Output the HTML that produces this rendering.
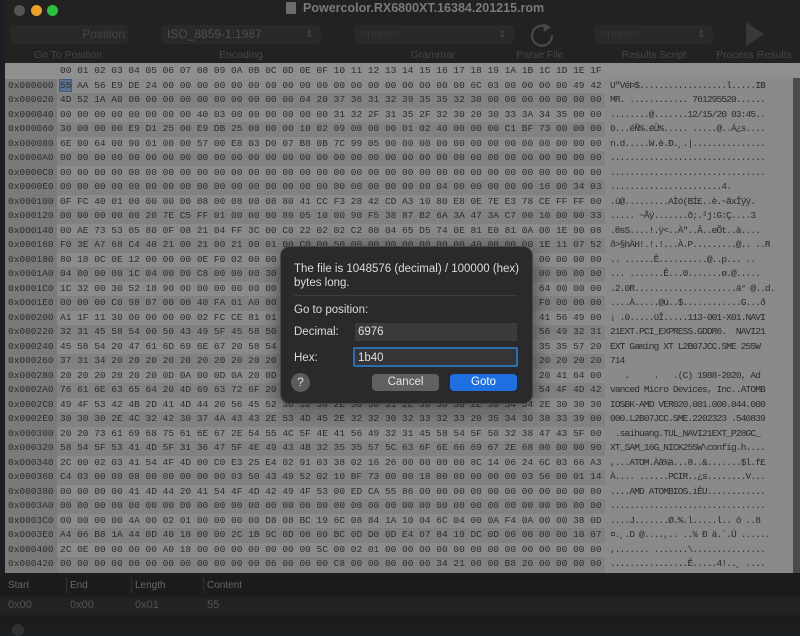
<!DOCTYPE html>
<html><head><meta charset="utf-8"><style>
*{margin:0;padding:0;box-sizing:border-box}
body{width:800px;height:630px;overflow:hidden;background:#1b1e23;font-family:"Liberation Sans",sans-serif;position:relative}
.win{position:absolute;left:5px;top:0;width:795px;height:630px;background:#222}
.t{position:absolute;white-space:pre}
.dot{position:absolute;top:5px;width:11px;height:11px;border-radius:50%}
.fld{position:absolute;top:25px;height:19px;background:#292929;border-radius:4px;color:#444;font-size:12px;line-height:19px}
.lbl{position:absolute;top:49px;font-size:10.5px;color:#474747;text-align:center;width:120px}
.mono{font-family:"Liberation Mono",monospace;font-size:9.5px;color:#2b2b2b}
#hexhdr{position:absolute;left:5px;top:63px;width:795px;height:15.5px;background:#8f8f8f}
.row{position:absolute;left:5px;width:788px;height:14.5px;line-height:14.5px;overflow:hidden}
.row .a{position:absolute;left:0;width:52px;height:100%;background:#7a7a7a;padding-left:3px}
.row .h{position:absolute;left:52px;width:548px;height:100%;padding-left:3px;white-space:pre;overflow:hidden}
.row .s{position:absolute;left:600px;width:188px;height:100%;background:#8a8a8a;padding-left:5px;letter-spacing:-0.86px;white-space:pre}
.row.l .h{background:#8b8b8b}
.row.d .h{background:#818181}
</style></head><body>
<div class="win">
<div class="dot" style="left:9px;background:#555"></div>
<div class="dot" style="left:26px;background:#e9a22a"></div>
<div class="dot" style="left:42px;background:#2cbf41"></div>
<div class="t" style="left:281px;top:2px;width:10px;height:12px;background:#6c6c6c;border-radius:1px"></div>
<div class="t" style="left:298px;top:1px;font-size:12.5px;font-weight:bold;color:#7a7a7a">Powercolor.RX6800XT.16384.201215.rom</div>

<div class="fld" style="left:5px;width:118px;text-align:right;padding-right:3px">Position</div>
<div class="fld" style="left:156px;width:160px;padding-left:6px;color:#4e4e4e">ISO_8859-1:1987<span style="position:absolute;right:8px;font-size:9px">⇕</span></div>
<div class="fld" style="left:349px;width:160px;padding-left:6px;color:#363636">&lt;none&gt;<span style="position:absolute;right:8px;font-size:9px;color:#4a4a4a">⇕</span></div>
<svg class="t" style="left:523px;top:21px" width="30" height="30" viewBox="0 0 30 30"><path d="M19 6 A10 10 0 1 0 24 14" fill="none" stroke="#484848" stroke-width="2.2"/><path d="M15 2 L23 6 L16 11 Z" fill="#484848"/></svg>
<div class="fld" style="left:589px;width:119px;padding-left:6px;color:#363636">&lt;none&gt;<span style="position:absolute;right:8px;font-size:9px;color:#4a4a4a">⇕</span></div>
<svg class="t" style="left:741px;top:22px" width="20" height="24"><path d="M0 0 L18 12 L0 24Z" fill="#383838"/></svg>
<div class="lbl" style="left:3px">Go To Position</div>
<div class="lbl" style="left:176px">Encoding</div>
<div class="lbl" style="left:368px">Grammar</div>
<div class="lbl" style="left:475px">Parse File</div>
<div class="lbl" style="left:589px">Results Script</div>
<div class="lbl" style="left:689px">Process Results</div>
</div>

<div id="hexhdr" class="mono"><span class="t" style="left:55px;line-height:15.5px">00 01 02 03 04 05 06 07 08 09 0A 0B 0C 0D 0E 0F 10 11 12 13 14 15 16 17 18 19 1A 1B 1C 1D 1E 1F</span></div>
<div style="position:absolute;left:793px;top:78px;width:7px;height:497px;background:#4a4a4a"></div>

<div class="mono">
<div class="row l" style="top:78.5px"><span class="a">0x000000</span><span class="h"><span style="outline:1px solid #3a5a80;background:#5d7190">55</span> AA 56 E9 DE 24 00 00 00 00 00 00 00 00 00 00 00 00 00 00 00 00 00 00 6C 03 00 00 00 00 49 42</span><span class="s">U"VéÞ$..................l.....IB</span></div>
<div class="row d" style="top:93px"><span class="a">0x000020</span><span class="h">4D 52 1A A0 00 00 00 00 00 00 00 00 00 00 04 20 37 36 31 32 39 35 35 32 30 00 00 00 00 00 00 00</span><span class="s">MR. ............ 761295520......</span></div>
<div class="row l" style="top:107.5px"><span class="a">0x000040</span><span class="h">00 00 00 00 00 00 00 00 40 03 00 00 00 00 00 00 31 32 2F 31 35 2F 32 30 20 30 33 3A 34 35 00 00</span><span class="s">........@.......12/15/20 03:45..</span></div>
<div class="row d" style="top:122px"><span class="a">0x000060</span><span class="h">30 00 00 00 E9 D1 25 00 E9 DB 25 00 00 00 10 02 09 00 00 00 01 02 40 00 00 00 C1 BF 73 00 00 00</span><span class="s">0...éÑ%.éÛ%..... .....@..Á¿s....</span></div>
<div class="row l" style="top:136.5px"><span class="a">0x000080</span><span class="h">6E 00 64 00 90 01 00 00 57 00 E8 03 D0 07 B8 0B 7C 99 05 00 00 00 00 00 00 00 00 00 00 00 00 00</span><span class="s">n.d.....W.è.Ð.¸.|...............</span></div>
<div class="row d" style="top:151px"><span class="a">0x0000A0</span><span class="h">00 00 00 00 00 00 00 00 00 00 00 00 00 00 00 00 00 00 00 00 00 00 00 00 00 00 00 00 00 00 00 00</span><span class="s">................................</span></div>
<div class="row l" style="top:165.5px"><span class="a">0x0000C0</span><span class="h">00 00 00 00 00 00 00 00 00 00 00 00 00 00 00 00 00 00 00 00 00 00 00 00 00 00 00 00 00 00 00 00</span><span class="s">................................</span></div>
<div class="row d" style="top:180px"><span class="a">0x0000E0</span><span class="h">00 00 00 00 00 00 00 00 00 00 00 00 00 00 00 00 00 00 00 00 00 00 04 00 00 00 00 00 16 00 34 03</span><span class="s">.......................4.</span></div>
<div class="row l" style="top:194.5px"><span class="a">0x000100</span><span class="h">0F FC 40 01 00 00 00 00 08 00 08 00 08 80 41 CC F3 28 42 CD A3 10 80 E8 0E 7E E3 78 CE FF FF 00</span><span class="s">.ü@.........AÌó(BÍ£..è.~ãxÎÿÿ.</span></div>
<div class="row d" style="top:209px"><span class="a">0x000120</span><span class="h">00 00 00 00 00 20 7E C5 FF 01 00 00 00 80 05 10 00 90 F5 38 87 B2 6A 3A 47 3A C7 00 10 00 00 33</span><span class="s">..... ~Åÿ.......õ;.²j:G:Ç....3</span></div>
<div class="row l" style="top:223.5px"><span class="a">0x000140</span><span class="h">00 AE 73 53 05 80 0F 08 21 04 FF 3C 00 C0 22 02 02 C2 80 04 65 D5 74 0E 81 E0 81 0A 00 1E 90 08</span><span class="s">.®sS....!.ÿ<..À"..Â..eÕt..à....</span></div>
<div class="row d" style="top:238px"><span class="a">0x000160</span><span class="h">F0 3E A7 68 C4 48 21 00 21 00 21 00 01 00 C0 00 50 00 00 00 00 00 00 00 40 00 00 00 1E 11 07 52</span><span class="s">ð>§hÄH!.!.!...À.P.........@.. ..R</span></div>
<div class="row l" style="top:252.5px"><span class="a">0x000180</span><span class="h">80 18 0C 0E 12 00 00 00 0E F0 02 00 00 00 00 00 00 00 00 00 00 00 00 40 00 00 70 00 00 00 00 00</span><span class="s">.. ......Ê..........@..p... ..</span></div>
<div class="row d" style="top:267px"><span class="a">0x0001A0</span><span class="h">04 00 00 00 1C 04 00 00 C8 00 00 00 30 00 00 00 00 00 00 00 00 F8 00 40 00 00 00 00 00 00 00 00</span><span class="s">... .......Ê...0.......ø.@.....</span></div>
<div class="row l" style="top:281.5px"><span class="a">0x0001C0</span><span class="h">1C 32 00 30 52 18 90 00 00 00 00 00 00 00 00 00 00 00 00 00 00 00 E4 B0 20 40 00 00 64 00 00 00</span><span class="s">.2.0R.....................ä° @..d.</span></div>
<div class="row d" style="top:296px"><span class="a">0x0001E0</span><span class="h">00 00 00 C0 98 07 00 00 40 FA 01 A0 00 00 00 00 00 00 00 00 00 00 00 00 00 47 01 00 F0 00 00 00</span><span class="s">....À.....@ú..$............G...ð</span></div>
<div class="row l" style="top:310.5px"><span class="a">0x000200</span><span class="h">A1 1F 11 30 00 00 00 00 02 FC CE 81 01 00 00 31 31 33 2D 30 30 31 2D 58 30 31 00 4E 41 56 49 00</span><span class="s">¡ .0.....üÎ.....113-001-X01.NAVI</span></div>
<div class="row d" style="top:325px"><span class="a">0x000220</span><span class="h">32 31 45 58 54 00 50 43 49 5F 45 58 50 52 45 53 53 00 47 44 44 52 36 00 20 20 4E 41 56 49 32 31</span><span class="s">21EXT.PCI_EXPRESS.GDDR6.  NAVI21</span></div>
<div class="row l" style="top:339.5px"><span class="a">0x000240</span><span class="h">45 58 54 20 47 61 6D 69 6E 67 20 58 54 20 4C 32 42 30 37 4A 43 43 2E 53 4D 45 20 32 35 35 57 20</span><span class="s">EXT Gaming XT L2B07JCC.SME 255W</span></div>
<div class="row d" style="top:354px"><span class="a">0x000260</span><span class="h">37 31 34 20 20 20 20 20 20 20 20 20 20 20 20 20 20 20 20 20 20 20 20 20 20 20 20 20 20 20 20 20</span><span class="s">714</span></div>
<div class="row l" style="top:368.5px"><span class="a">0x000280</span><span class="h">20 20 20 20 20 20 0D 0A 00 0D 0A 20 0D 0A 28 43 29 20 31 39 38 38 2D 32 30 32 30 2C 20 41 64 00</span><span class="s">   .     .   .(C) 1988-2020, Ad</span></div>
<div class="row d" style="top:383px"><span class="a">0x0002A0</span><span class="h">76 61 6E 63 65 64 20 4D 69 63 72 6F 20 44 65 76 69 63 65 73 2C 20 49 6E 63 2E 00 41 54 4F 4D 42</span><span class="s">vanced Micro Devices, Inc..ATOMB</span></div>
<div class="row l" style="top:397.5px"><span class="a">0x0002C0</span><span class="h">49 4F 53 42 4B 2D 41 4D 44 20 56 45 52 30 32 30 2E 30 30 31 2E 30 30 30 2E 30 34 34 2E 30 30 30</span><span class="s">IOSBK-AMD VER020.001.000.044.000</span></div>
<div class="row d" style="top:412px"><span class="a">0x0002E0</span><span class="h">30 30 30 2E 4C 32 42 30 37 4A 43 43 2E 53 4D 45 2E 32 32 30 32 33 32 33 20 35 34 30 38 33 39 00</span><span class="s">000.L2B07JCC.SME.2202323 .540839</span></div>
<div class="row l" style="top:426.5px"><span class="a">0x000300</span><span class="h">20 20 73 61 69 68 75 61 6E 67 2E 54 55 4C 5F 4E 41 56 49 32 31 45 58 54 5F 50 32 38 47 43 5F 00</span><span class="s"> .saihuang.TUL_NAVI21EXT_P28GC_</span></div>
<div class="row d" style="top:441px"><span class="a">0x000320</span><span class="h">58 54 5F 53 41 4D 5F 31 36 47 5F 4E 49 43 4B 32 35 35 57 5C 63 6F 6E 66 69 67 2E 68 00 00 00 90</span><span class="s">XT_SAM_16G_NICK255W\config.h....</span></div>
<div class="row l" style="top:455.5px"><span class="a">0x000340</span><span class="h">2C 00 02 03 41 54 4F 4D 00 C0 E3 25 E4 02 91 03 38 02 16 26 00 00 00 00 8C 14 06 24 6C 03 66 A3</span><span class="s">,...ATOM.Àã%ä...8..&.......$l.f£</span></div>
<div class="row d" style="top:470px"><span class="a">0x000360</span><span class="h">C4 03 00 00 08 00 00 00 00 00 03 50 43 49 52 02 10 BF 73 00 00 18 00 00 00 00 00 03 56 00 01 14</span><span class="s">Ä.... ......PCIR..¿s........V...</span></div>
<div class="row l" style="top:484.5px"><span class="a">0x000380</span><span class="h">00 00 00 00 41 4D 44 20 41 54 4F 4D 42 49 4F 53 00 ED CA 55 86 00 00 00 00 00 00 00 00 00 00 00</span><span class="s">....AMD ATOMBIOS.íÊU............</span></div>
<div class="row d" style="top:499px"><span class="a">0x0003A0</span><span class="h">00 00 00 00 00 00 00 00 00 00 00 00 00 00 00 00 00 00 00 00 00 00 00 00 00 00 00 00 00 00 00 00</span><span class="s">................................</span></div>
<div class="row l" style="top:513.5px"><span class="a">0x0003C0</span><span class="h">00 00 00 00 4A 00 02 01 00 00 00 00 D8 08 BC 19 6C 08 84 1A 10 04 6C 04 00 0A F4 0A 00 00 38 0D</span><span class="s">....J.......Ø.%.l.....l.. ô ..8</span></div>
<div class="row d" style="top:528px"><span class="a">0x0003E0</span><span class="h">A4 06 B8 1A 44 0D 40 18 00 00 2C 1B 9C 0D 00 00 BC 0D D0 0D E4 07 84 19 DC 0D 00 00 00 00 10 07</span><span class="s">¤.¸.D @....,.. ..¾ Ð ä.´.Ü ......</span></div>
<div class="row l" style="top:542.5px"><span class="a">0x000400</span><span class="h">2C 0E 00 00 00 00 A0 18 00 00 00 00 00 00 00 5C 00 02 01 00 00 00 00 00 00 00 00 00 00 00 00 00</span><span class="s">,....... .......\...............</span></div>
<div class="row d" style="top:557px;height:16px"><span class="a">0x000420</span><span class="h">00 00 00 00 00 00 00 00 00 00 00 00 06 00 00 00 C8 00 00 00 00 00 34 21 00 00 B8 20 00 00 00 00</span><span class="s">................Ê.....4!..¸ ....</span></div>
</div>

<div style="position:absolute;left:0;top:573px;width:800px;height:57px;background:#1c1c1c"></div>
<div style="position:absolute;left:0;top:597px;width:800px;height:18px;background:#222"></div>
<div class="t" style="left:8px;top:580px;font-size:10px;color:#666">Start</div>
<div class="t" style="left:70px;top:580px;font-size:10px;color:#666">End</div>
<div class="t" style="left:135px;top:580px;font-size:10px;color:#666">Length</div>
<div class="t" style="left:207px;top:580px;font-size:10px;color:#666">Content</div>
<div style="position:absolute;left:66px;top:577px;width:1px;height:16px;background:#303030"></div>
<div style="position:absolute;left:131px;top:577px;width:1px;height:16px;background:#303030"></div>
<div style="position:absolute;left:203px;top:577px;width:1px;height:16px;background:#303030"></div>
<div class="t" style="left:8px;top:599px;font-size:11px;color:#555">0x00</div>
<div class="t" style="left:70px;top:599px;font-size:11px;color:#555">0x00</div>
<div class="t" style="left:135px;top:599px;font-size:11px;color:#555">0x01</div>
<div class="t" style="left:207px;top:599px;font-size:11px;color:#555">55</div>
<div style="position:absolute;left:12px;top:624px;width:12px;height:12px;border-radius:50%;background:#303030"></div>

<div style="position:absolute;left:280px;top:246px;width:253px;height:158px;background:#2a2a2c;border:1px solid #4a4a4a;border-radius:10px;box-shadow:0 4px 20px rgba(0,0,0,.5)"></div>
<div class="t" style="left:294px;top:262px;font-size:11.5px;color:#dcdcdc;line-height:14px">The file is 1048576 (decimal) / 100000 (hex)
bytes long.</div>
<div style="position:absolute;left:294px;top:295px;width:223px;height:1px;background:#3d3d3d"></div>
<div class="t" style="left:294px;top:304px;font-size:11.5px;color:#dcdcdc">Go to position:</div>
<div class="t" style="left:294px;top:326px;font-size:11.5px;color:#dcdcdc">Decimal:</div>
<div style="position:absolute;left:355px;top:323px;width:162px;height:18px;background:#3b3b3d"></div>
<div class="t" style="left:358px;top:326px;font-size:11.5px;color:#e0e0e0">6976</div>
<div class="t" style="left:294px;top:352px;font-size:11.5px;color:#dcdcdc">Hex:</div>
<div style="position:absolute;left:353px;top:347px;width:165px;height:20px;background:#353537;border:2px solid #2c6fae;border-radius:2px"></div>
<div class="t" style="left:358px;top:352px;font-size:11.5px;color:#e0e0e0">1b40</div>
<div style="position:absolute;left:291px;top:373px;width:19px;height:19px;border-radius:50%;background:#5c5c5e;color:#ddd;font-size:12px;text-align:center;line-height:19px">?</div>
<div style="position:absolute;left:372px;top:374px;width:67px;height:17px;border-radius:4px;background:#606062;color:#e4e4e4;font-size:11.5px;text-align:center;line-height:17px">Cancel</div>
<div style="position:absolute;left:450px;top:374px;width:67px;height:17px;border-radius:4px;background:#1e6fe0;color:#fff;font-size:11.5px;text-align:center;line-height:17px">Goto</div>
</body></html>
